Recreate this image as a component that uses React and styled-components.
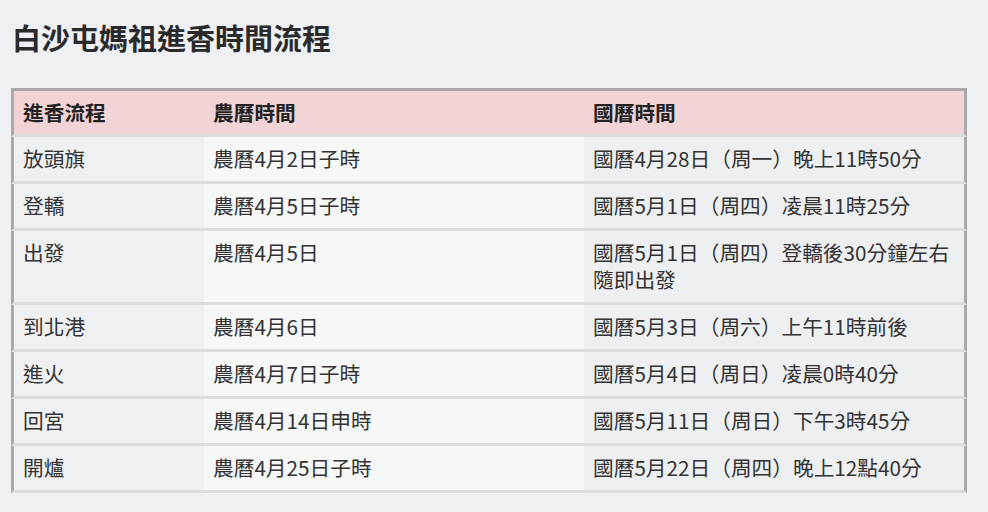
import React from "react";
import styled, { createGlobalStyle } from "styled-components";

const GlobalStyle = createGlobalStyle`
  body {
    margin: 0;
    background: #eef0f3;
    font-family: "Noto Sans CJK TC", "Noto Sans", sans-serif;
    color: #333;
  }
`;

const Page = styled.div`
  padding: 16px 11px 0;
`;

const Title = styled.h2`
  margin: 0 0 30px 1px;
  font-size: 29px;
  line-height: 42px;
  font-weight: 700;
  color: #2a2a2a;
`;

const Table = styled.table`
  width: 956px;
  border-collapse: separate;
  border-spacing: 0;
  table-layout: fixed;
  font-size: 20.7px;
  line-height: 27px;
`;

const Col = styled.col`
  width: ${({ w }) => w}px;
`;

const Cell = styled.td`
  padding: 8px 9px 9px;
  vertical-align: top;
  text-align: left;
  border-bottom: 3px solid #dcdddf;
  background: ${({ col }) => (col === 1 ? "#f6f7f7" : col === 2 ? "#eeeff1" : "#eef0f2")};
  border-left: ${({ col }) => (col === 0 ? "3px solid #a9a8aa" : "none")};
  border-right: ${({ col }) => (col === 2 ? "3px solid #a9a8aa" : "none")};
`;

const HeadCell = styled(Cell).attrs({ as: "th" })`
  background: #f2d4d6;
  font-weight: 700;
  color: #222;
  border-top: 3px solid #a9a8aa;
  padding: 8px 9px 8px;
`;

const rows = [
  ["放頭旗", "農曆4月2日子時", "國曆4月28日（周一）晚上11時50分"],
  ["登轎", "農曆4月5日子時", "國曆5月1日（周四）凌晨11時25分"],
  ["出發", "農曆4月5日", "國曆5月1日（周四）登轎後30分鐘左右隨即出發"],
  ["到北港", "農曆4月6日", "國曆5月3日（周六）上午11時前後"],
  ["進火", "農曆4月7日子時", "國曆5月4日（周日）凌晨0時40分"],
  ["回宮", "農曆4月14日申時", "國曆5月11日（周日）下午3時45分"],
  ["開爐", "農曆4月25日子時", "國曆5月22日（周四）晚上12點40分"],
];

const headers = ["進香流程", "農曆時間", "國曆時間"];

export default function App() {
  return (
    <Page>
      <GlobalStyle />
      <Title>白沙屯媽祖進香時間流程</Title>
      <Table>
        <colgroup>
          <Col w={193} />
          <Col w={380} />
          <Col w={383} />
        </colgroup>
        <thead>
          <tr>
            {headers.map((h, i) => (
              <HeadCell key={h} col={i}>
                {h}
              </HeadCell>
            ))}
          </tr>
        </thead>
        <tbody>
          {rows.map((r) => (
            <tr key={r[0]}>
              {r.map((c, i) => (
                <Cell key={i} col={i}>
                  {c}
                </Cell>
              ))}
            </tr>
          ))}
        </tbody>
      </Table>
    </Page>
  );
}
